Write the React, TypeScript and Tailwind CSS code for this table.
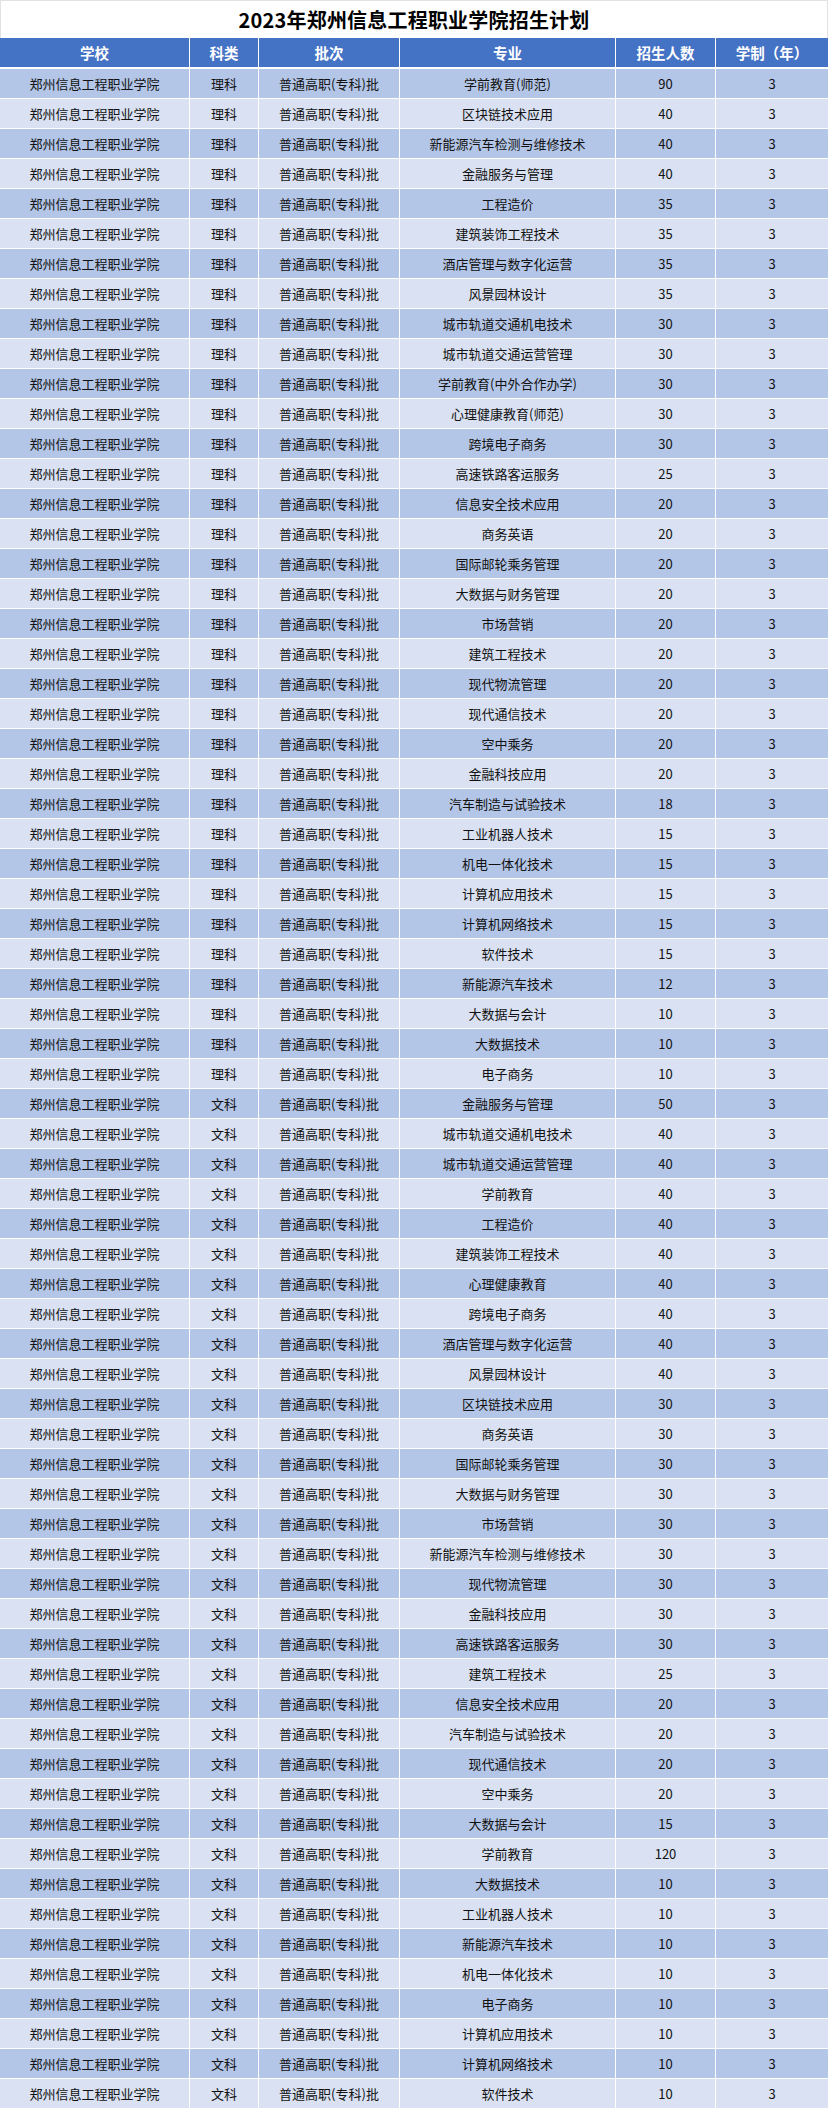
const SCHOOL = "郑州信息工程职业学院";
const BATCH = "普通高职(专科)批";

const liRows: [string, number][] = [
  ["学前教育(师范)", 90],
  ["区块链技术应用", 40],
  ["新能源汽车检测与维修技术", 40],
  ["金融服务与管理", 40],
  ["工程造价", 35],
  ["建筑装饰工程技术", 35],
  ["酒店管理与数字化运营", 35],
  ["风景园林设计", 35],
  ["城市轨道交通机电技术", 30],
  ["城市轨道交通运营管理", 30],
  ["学前教育(中外合作办学)", 30],
  ["心理健康教育(师范)", 30],
  ["跨境电子商务", 30],
  ["高速铁路客运服务", 25],
  ["信息安全技术应用", 20],
  ["商务英语", 20],
  ["国际邮轮乘务管理", 20],
  ["大数据与财务管理", 20],
  ["市场营销", 20],
  ["建筑工程技术", 20],
  ["现代物流管理", 20],
  ["现代通信技术", 20],
  ["空中乘务", 20],
  ["金融科技应用", 20],
  ["汽车制造与试验技术", 18],
  ["工业机器人技术", 15],
  ["机电一体化技术", 15],
  ["计算机应用技术", 15],
  ["计算机网络技术", 15],
  ["软件技术", 15],
  ["新能源汽车技术", 12],
  ["大数据与会计", 10],
  ["大数据技术", 10],
  ["电子商务", 10],
];

const wenRows: [string, number][] = [
  ["金融服务与管理", 50],
  ["城市轨道交通机电技术", 40],
  ["城市轨道交通运营管理", 40],
  ["学前教育", 40],
  ["工程造价", 40],
  ["建筑装饰工程技术", 40],
  ["心理健康教育", 40],
  ["跨境电子商务", 40],
  ["酒店管理与数字化运营", 40],
  ["风景园林设计", 40],
  ["区块链技术应用", 30],
  ["商务英语", 30],
  ["国际邮轮乘务管理", 30],
  ["大数据与财务管理", 30],
  ["市场营销", 30],
  ["新能源汽车检测与维修技术", 30],
  ["现代物流管理", 30],
  ["金融科技应用", 30],
  ["高速铁路客运服务", 30],
  ["建筑工程技术", 25],
  ["信息安全技术应用", 20],
  ["汽车制造与试验技术", 20],
  ["现代通信技术", 20],
  ["空中乘务", 20],
  ["大数据与会计", 15],
  ["学前教育", 120],
  ["大数据技术", 10],
  ["工业机器人技术", 10],
  ["新能源汽车技术", 10],
  ["机电一体化技术", 10],
  ["电子商务", 10],
  ["计算机应用技术", 10],
  ["计算机网络技术", 10],
  ["软件技术", 10],
];

const rows = [
  ...liRows.map(([major, count]) => ({ kind: "理科", major, count })),
  ...wenRows.map(([major, count]) => ({ kind: "文科", major, count })),
];

const headers = ["学校", "科类", "批次", "专业", "招生人数", "学制（年）"];

const gridCols = "grid grid-cols-[189px_68px_140px_215px_99px_112px] gap-x-px";

export default function App() {
  return (
    <div
      className="w-[828px] bg-white"
      style={{ fontFamily: '"Noto Sans CJK SC", "Noto Sans", sans-serif' }}
    >
      <div className="flex h-[38px] items-center justify-center border-x border-t border-[#e2e2e2] pt-px">
        <h1 className="text-[20px] font-bold leading-none tracking-[0.2px] text-black">
          2023年郑州信息工程职业学院招生计划
        </h1>
      </div>

      <div className={`${gridCols} h-[29px]`}>
        {headers.map((h) => (
          <div
            key={h}
            className="flex items-center justify-center bg-[#4472c4] text-[14.5px] font-bold text-white"
          >
            {h}
          </div>
        ))}
      </div>

      <div className="mt-[2px] flex flex-col gap-px">
        {rows.map((r, i) => {
          const bg = i % 2 === 0 ? "bg-[#b4c6e7]" : "bg-[#d9e1f2]";
          const cells = [SCHOOL, r.kind, BATCH, r.major, String(r.count), "3"];
          return (
            <div key={i} className={`${gridCols} h-[29px]`}>
              {cells.map((c, j) => (
                <div
                  key={j}
                  className={`flex items-center justify-center ${bg} text-[13px] text-[#111]`}
                >
                  {c}
                </div>
              ))}
            </div>
          );
        })}
      </div>
    </div>
  );
}
